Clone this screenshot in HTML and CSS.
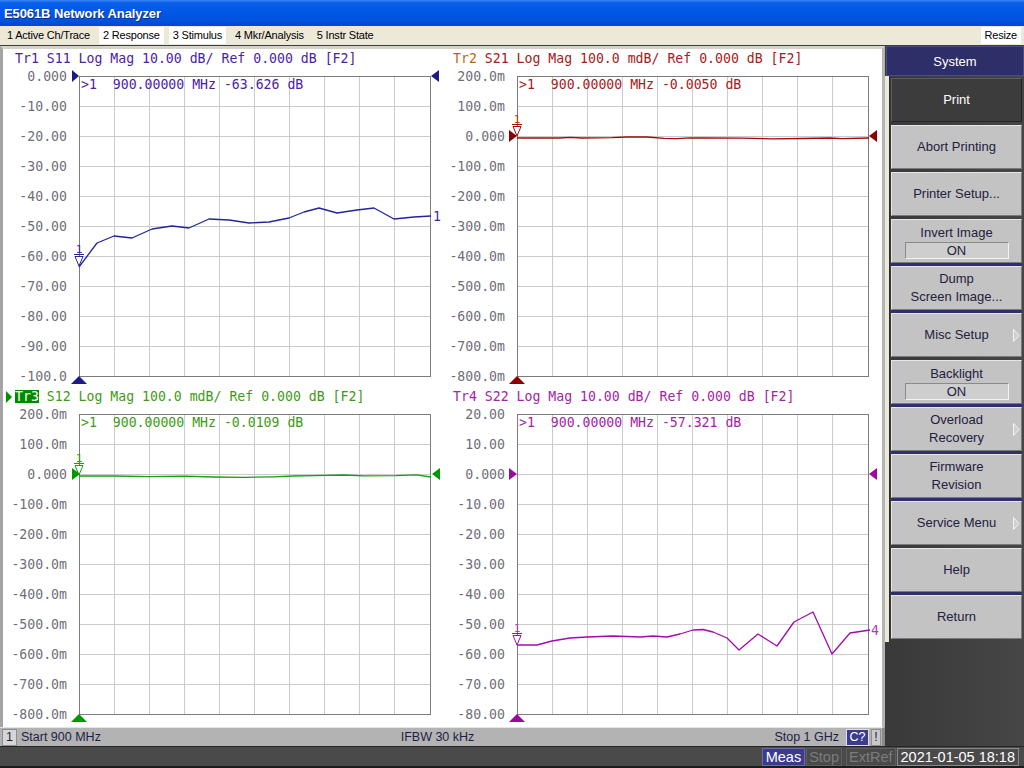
FILE: index.html
```html
<!DOCTYPE html>
<html>
<head>
<meta charset="utf-8">
<title>E5061B Network Analyzer</title>
<link rel="stylesheet" href="styles.css">
</head>
<body>
<div class="screen">
  <div class="titlebar"><span class="title">E5061B Network Analyzer</span></div>
  <div class="menubar">
    <span class="menu">1 Active Ch/Trace</span>
    <span class="menu boxed">2 Response</span>
    <span class="menu boxed">3 Stimulus</span>
    <span class="menu">4 Mkr/Analysis</span>
    <span class="menu">5 Instr State</span>
    <span class="spacer"></span>
    <span class="menu boxed">Resize</span>
  </div>
  <div class="rule"></div>
  <div class="main">
    <div class="meas">
      <div class="charts">
        <!-- Trace 1 -->
        <div class="cell t1">
          <div class="hdr"><span class="act"></span><span class="trn">Tr1</span> S11 Log Mag 10.00 dB/ Ref 0.000 dB [F2]</div>
          <svg class="plot" width="438" height="319" viewBox="0 0 438 319">
            <defs>
              <path id="grid" d="M110.5 8.5V308.5M145.5 8.5V308.5M180.5 8.5V308.5M215.5 8.5V308.5M250.5 8.5V308.5M285.5 8.5V308.5M320.5 8.5V308.5M355.5 8.5V308.5M390.5 8.5V308.5M75.5 38.5H426.5M75.5 68.5H426.5M75.5 98.5H426.5M75.5 128.5H426.5M75.5 158.5H426.5M75.5 188.5H426.5M75.5 218.5H426.5M75.5 248.5H426.5M75.5 278.5H426.5"/>
            </defs>
            <use href="#grid" class="grid"/>
            <rect class="frame" x="75.5" y="8.5" width="351" height="300"/>
            <g class="ylab">
              <text x="63" y="12.5">0.000</text>
              <text x="63" y="42.5">-10.00</text>
              <text x="63" y="72.5">-20.00</text>
              <text x="63" y="102.5">-30.00</text>
              <text x="63" y="132.5">-40.00</text>
              <text x="63" y="162.5">-50.00</text>
              <text x="63" y="192.5">-60.00</text>
              <text x="63" y="222.5">-70.00</text>
              <text x="63" y="252.5">-80.00</text>
              <text x="63" y="282.5">-90.00</text>
              <text x="63" y="312.5">-100.0</text>
            </g>
            <text class="readout" x="77" y="21" xml:space="preserve">&gt;1  900.00000 MHz -63.626 dB</text>
            <polyline class="trace" points="75,199 93,175 110,168 128,170 148,161 168,158 185,160 205,151 225,152 245,155 265,154 285,150 300,144 315,140 333,145 353,142 370,140 390,151 410,149 427,148"/>
            <g class="mk" transform="translate(75 199)"><text x="0" y="-14">1</text><path d="M-5 -12.5H5M-4 -10.5H4L0 -1Z"/></g>
            <text class="endlab" x="429" y="152.5">1</text>
            <path class="refmk" d="M68 2L75 8L68 14ZM435 2L427 8L435 14ZM67 316L75 308L83 316Z"/>
          </svg>
        </div>
        <!-- Trace 2 -->
        <div class="cell t2">
          <div class="hdr"><span class="act"></span><span class="trn">Tr2</span> S21 Log Mag 100.0 mdB/ Ref 0.000 dB [F2]</div>
          <svg class="plot" width="438" height="319" viewBox="0 0 438 319">
            <use href="#grid" class="grid"/>
            <rect class="frame" x="75.5" y="8.5" width="351" height="300"/>
            <g class="ylab">
              <text x="63" y="12.5">200.0m</text>
              <text x="63" y="42.5">100.0m</text>
              <text x="63" y="72.5">0.000</text>
              <text x="63" y="102.5">-100.0m</text>
              <text x="63" y="132.5">-200.0m</text>
              <text x="63" y="162.5">-300.0m</text>
              <text x="63" y="192.5">-400.0m</text>
              <text x="63" y="222.5">-500.0m</text>
              <text x="63" y="252.5">-600.0m</text>
              <text x="63" y="282.5">-700.0m</text>
              <text x="63" y="312.5">-800.0m</text>
            </g>
            <text class="readout" x="77" y="21" xml:space="preserve">&gt;1  900.00000 MHz -0.0050 dB</text>
            <polyline class="trace" points="75,70 118,70 128,69.3 140,70 170,69.7 185,69 205,69 222,70.3 235,70.6 248,69.8 262,70 300,70.2 330,70.8 360,70.5 388,70 400,70.6 427,70"/>
            <g class="mk" transform="translate(75 69)"><text x="0" y="-14">1</text><path d="M-5 -12.5H5M-4 -10.5H4L0 -1Z"/></g>
            <path class="refmk" d="M67 62L75 68L67 74ZM435 62L427 68L435 74ZM67 316L75 308L83 316Z"/>
          </svg>
        </div>
        <!-- Trace 3 -->
        <div class="cell t3">
          <div class="hdr"><span class="act"></span><span class="trn">Tr3</span> S12 Log Mag 100.0 mdB/ Ref 0.000 dB [F2]</div>
          <svg class="plot" width="438" height="319" viewBox="0 0 438 319">
            <use href="#grid" class="grid"/>
            <rect class="frame" x="75.5" y="8.5" width="351" height="300"/>
            <g class="ylab">
              <text x="63" y="12.5">200.0m</text>
              <text x="63" y="42.5">100.0m</text>
              <text x="63" y="72.5">0.000</text>
              <text x="63" y="102.5">-100.0m</text>
              <text x="63" y="132.5">-200.0m</text>
              <text x="63" y="162.5">-300.0m</text>
              <text x="63" y="192.5">-400.0m</text>
              <text x="63" y="222.5">-500.0m</text>
              <text x="63" y="252.5">-600.0m</text>
              <text x="63" y="282.5">-700.0m</text>
              <text x="63" y="312.5">-800.0m</text>
            </g>
            <text class="readout" x="77" y="21" xml:space="preserve">&gt;1  900.00000 MHz -0.0109 dB</text>
            <polyline class="trace" points="75,70 110,70 145,70.6 180,70.2 210,71 240,71.3 268,70.8 290,70 310,69.6 340,69 360,69.8 392,69.7 412,68.8 427,71"/>
            <g class="mk" transform="translate(75 70)"><text x="0" y="-14">1</text><path d="M-5 -12.5H5M-4 -10.5H4L0 -1Z"/></g>
            <path class="refmk" d="M68 62L76 68L68 74ZM436 62L428 68L436 74ZM67 316L75 308L83 316Z"/>
          </svg>
        </div>
        <!-- Trace 4 -->
        <div class="cell t4">
          <div class="hdr"><span class="act"></span><span class="trn">Tr4</span> S22 Log Mag 10.00 dB/ Ref 0.000 dB [F2]</div>
          <svg class="plot" width="438" height="319" viewBox="0 0 438 319">
            <use href="#grid" class="grid"/>
            <rect class="frame" x="75.5" y="8.5" width="351" height="300"/>
            <g class="ylab">
              <text x="63" y="12.5">20.00</text>
              <text x="63" y="42.5">10.00</text>
              <text x="63" y="72.5">0.000</text>
              <text x="63" y="102.5">-10.00</text>
              <text x="63" y="132.5">-20.00</text>
              <text x="63" y="162.5">-30.00</text>
              <text x="63" y="192.5">-40.00</text>
              <text x="63" y="222.5">-50.00</text>
              <text x="63" y="252.5">-60.00</text>
              <text x="63" y="282.5">-70.00</text>
              <text x="63" y="312.5">-80.00</text>
            </g>
            <text class="readout" x="77" y="21" xml:space="preserve">&gt;1  900.00000 MHz -57.321 dB</text>
            <polyline class="trace" points="75,239 95,239 110,235 128,232 145,231 171,230 198,231 211,230 225,231 238,228 251,224 261,223.5 271,226 285,232 297,244 316,228 335,240 352,216 371,206 390,248 408,227 428,224"/>
            <g class="mk" transform="translate(75 240)"><text x="0" y="-14">1</text><path d="M-5 -12.5H5M-4 -10.5H4L0 -1Z"/></g>
            <text class="endlab" x="429" y="228.5">4</text>
            <path class="refmk" d="M67 62L75 68L67 74ZM435 62L427 68L435 74ZM67 316L75 308L83 316Z"/>
          </svg>
        </div>
      </div>
      <div class="status">
        <div class="st-left"><span class="chbox">1</span><span class="st-start">Start 900 MHz</span></div>
        <div class="st-mid">IFBW 30 kHz</div>
        <div class="st-right"><span>Stop 1 GHz</span><span class="cbox">C?</span><span class="xbox">!</span></div>
      </div>
    </div>
    <div class="softkeys">
      <div class="sk-head">System</div>
      <div class="sk-list">
        <div class="sk sel">Print</div>
        <div class="sk">Abort Printing</div>
        <div class="sk">Printer Setup...</div>
        <div class="sk sep"><span>Invert Image</span><span class="val">ON</span></div>
        <div class="sk sep"><span>Dump</span><span>Screen Image...</span></div>
        <div class="sk">Misc Setup<svg class="arrow" width="7" height="13" viewBox="0 0 7 13"><path d="M0.5 0.5L6 6.5L0.5 12.5Z"/></svg></div>
        <div class="sk sep"><span>Backlight</span><span class="val">ON</span></div>
        <div class="sk sep"><span>Overload</span><span>Recovery</span><svg class="arrow" width="7" height="13" viewBox="0 0 7 13"><path d="M0.5 0.5L6 6.5L0.5 12.5Z"/></svg></div>
        <div class="sk sep"><span>Firmware</span><span>Revision</span></div>
        <div class="sk">Service Menu<svg class="arrow" width="7" height="13" viewBox="0 0 7 13"><path d="M0.5 0.5L6 6.5L0.5 12.5Z"/></svg></div>
        <div class="sk sep">Help</div>
        <div class="sk">Return</div>
      </div>
      <div class="sk-fill"></div>
    </div>
  </div>
  <div class="bottombar">
    <span class="bb meas-on">Meas</span>
    <span class="bb dim">Stop</span>
    <span class="bb dim ext">ExtRef</span>
    <span class="bb date">2021-01-05 18:18</span>
  </div>
</div>
</body>
</html>
```

FILE: styles.css
```css
* { box-sizing: border-box; margin: 0; padding: 0; }
html, body { width: 1024px; height: 768px; overflow: hidden; }
body { font-family: "Liberation Sans", Arial, sans-serif; background: #ece9d8; }

.screen { width: 1024px; height: 768px; display: flex; flex-direction: column; }

/* Title bar */
.titlebar {
  height: 26px; flex: none;
  background: linear-gradient(#3a86f4 0, #0d62ea 10%, #0058e6 40%, #0054e0 75%, #0048cc 100%);
  display: flex; align-items: center; padding-left: 4px;
}
.title { color: #fff; font-weight: bold; font-size: 13px; text-shadow: 1px 1px 0 #0b2f8a; letter-spacing: -0.1px; }

/* Menu bar */
.menubar {
  height: 19px; flex: none; display: flex; align-items: center; gap: 5px;
  padding: 0 3px; font-size: 11px; letter-spacing: -0.2px; color: #000; background: #ece9d8;
}
.menu { height: 17px; line-height: 17px; padding: 0 4px; white-space: nowrap; }
.menu.boxed { background: #fff; }
.spacer { flex: 1; }
.rule { height: 1px; flex: none; background: #3c3c3c; }

/* Main area */
.main { height: 700px; flex: none; display: flex; }
.meas { width: 885px; display: flex; flex-direction: column; }
.charts {
  height: 681px; background: #fff;
  border-top: 3px solid #d6d3ca; border-left: 3px solid #a4a4a4; border-right: 3px solid #b4b4b4;
  padding-left: 1px;
  display: grid; grid-template-columns: 438px 438px; grid-template-rows: 338px 338px;
}
.cell { display: flex; flex-direction: column; }
.hdr {
  height: 19px; line-height: 17px; white-space: pre;
  font-family: "DejaVu Sans Mono", monospace; font-size: 13.2px;
  padding-left: 2px; display: flex; align-items: center;
}
.act { width: 6px; height: 12px; margin-right: 3px; flex: none; }
.trn { line-height: 13px; }
.plot { display: block; }

.grid { stroke: #cbcbcb; stroke-width: 1; fill: none; shape-rendering: crispEdges; }
.frame { stroke: #7c7c7c; stroke-width: 1; fill: none; shape-rendering: crispEdges; }
.ylab text { font-family: "DejaVu Sans Mono", monospace; font-size: 13.2px; fill: #6e6e78; text-anchor: end; }
.readout { font-family: "DejaVu Sans Mono", monospace; font-size: 13.2px; white-space: pre; }
.endlab { font-family: "DejaVu Sans Mono", monospace; font-size: 13.2px; }
.trace { fill: none; stroke-width: 1.3; stroke-linejoin: round; }
.mk text { font-family: "DejaVu Sans Mono", monospace; font-size: 11px; text-anchor: middle; }
.mk path { fill: #fff; stroke-width: 1; }

/* trace colours */
.t1 .hdr, .t1 .readout { color: #4a22a6; fill: #4a22a6; }
.t1 .trace { stroke: #24249c; }
.t1 .mk text, .t1 .endlab { fill: #3c2aa8; }
.t1 .mk path { stroke: #24249c; }
.t1 .refmk { fill: #1c1c86; }

.t2 .hdr, .t2 .readout { color: #a42020; fill: #a42020; }
.t2 .trn { color: #b86a10; }
.t2 .trace { stroke: #a00a0a; }
.t2 .mk text { fill: #b04010; }
.t2 .mk path { stroke: #a00a0a; }
.t2 .refmk { fill: #8c0000; }

.t3 .hdr, .t3 .readout { color: #3e9a16; fill: #3e9a16; }
.t3 .act { width: 0; height: 0; border-left: 6px solid #009000; border-top: 6px solid transparent; border-bottom: 6px solid transparent; }
.t3 .trn { background: #008a00; color: #fff; }
.t3 .trace { stroke: #14a014; }
.t3 .mk text { fill: #2e9a10; }
.t3 .mk path { stroke: #14a014; }
.t3 .refmk { fill: #009800; }

.t4 .hdr, .t4 .readout { color: #a424a4; fill: #a424a4; }
.t4 .trace { stroke: #a00ca8; }
.t4 .mk text, .t4 .endlab { fill: #b040b8; }
.t4 .mk path { stroke: #a00ca8; }
.t4 .refmk { fill: #9a0a9e; }

/* Status bar */
.status {
  height: 19px; background: #b3b3b3; border-top: 1px solid #e4e4e4; border-right: 3px solid #8a8a8a;
  display: flex; align-items: center; font-size: 12.5px; color: #1e1e46; padding: 0 1px 0 2px;
}
.st-left, .st-right { flex: 1; display: flex; align-items: center; }
.st-right { justify-content: flex-end; }
.st-mid { margin-right: 8px; white-space: nowrap; }
.chbox { width: 15px; height: 17px; line-height: 15px; text-align: center; background: #d6d6d6; border: 1px solid #8e8e8e; }
.st-start { margin-left: 4px; }
.cbox { margin-left: 7px; width: 23px; height: 17px; line-height: 15px; text-align: center; background: #3c3c8c; color: #fff; border: 1px solid #dcdcec; }
.xbox { margin-left: 2px; width: 10px; height: 17px; line-height: 15px; text-align: center; background: #c8c8c8; border: 1px solid #8e8e8e; }

/* Softkeys */
.softkeys { width: 139px; display: flex; flex-direction: column; background: linear-gradient(90deg, #393939, #464646); }
.sk-head {
  height: 30px; flex: none; background: #2e2e68; border: 1px solid #4c4c88; margin-left: 1px;
  color: #fff; font-size: 13px; display: flex; align-items: center; justify-content: center;
}
.sk-list {
  flex: none; display: flex; flex-direction: column; padding: 2px 2px 0 6px;
  background: linear-gradient(90deg, #ece9d8 0, #ece9d8 4px, #2c2c2c 4px, #2c2c2c 5px, transparent 5px);
}
.sk {
  height: 44px; margin-bottom: 3px; background: #c3c3c3;
  border: 1px solid; border-color: #e6e6e6 #7a7a7a #7a7a7a #e6e6e6;
  color: #22203e; font-size: 13px; line-height: 18px;
  display: flex; flex-direction: column; align-items: center; justify-content: center; position: relative;
}
.sk.sel { background: #3c3c3c; color: #fff; border-color: #5c5c5c #262626 #262626 #5c5c5c; }
.sk.sep { box-shadow: 0 3px 0 #2f2f6e; }
.sk .val {
  width: 104px; height: 17px; line-height: 15px; text-align: center; background: #cecece;
  border: 1px solid; border-color: #8a8a8a #f2f2f2 #f2f2f2 #8a8a8a;
}
.sk .arrow { position: absolute; right: 1px; top: 15px; }
.sk .arrow path { fill: #cfcfcf; stroke: #f2f2f2; stroke-width: 1; }
.sk-fill { flex: 1; }

/* Bottom bar */
.bottombar {
  height: 22px; flex: none; background: #4a4a4a; border-top: 1px solid #262626; border-bottom: 2px solid #1c1c1c;
  display: flex; justify-content: flex-end; align-items: center; padding-right: 5px; font-size: 14.5px;
}
.bb { height: 18px; line-height: 16px; padding: 0 2px; border: 1px solid #5e5e5e; white-space: nowrap; }
.meas-on { background: #3b3b8e; color: #fff; border-color: #6a6aa8; padding: 0 3px; }
.dim { color: #7c7c7c; margin-left: 1px; }
.ext { margin-left: 4px; }
.date { color: #fff; border-color: #8a8a8a; margin-left: 1px; padding: 0 3px; }
```
